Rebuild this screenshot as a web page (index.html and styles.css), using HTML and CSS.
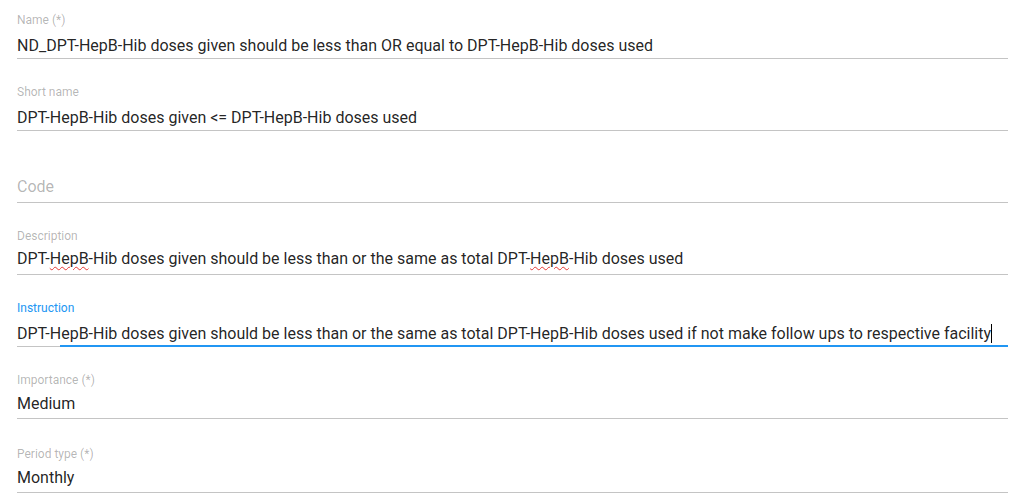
FILE: index.html
```html
<!DOCTYPE html>
<html>
<head>
<meta charset="utf-8">
<link rel="stylesheet" href="styles.css">
</head>
<body>
<form class="form">
  <div class="field">
    <label class="label">Name (*)</label>
    <div class="value">ND_DPT-HepB-Hib doses given should be less than OR equal to DPT-HepB-Hib doses used</div>
    <div class="line"></div>
  </div>
  <div class="field">
    <label class="label">Short name</label>
    <div class="value">DPT-HepB-Hib doses given &lt;= DPT-HepB-Hib doses used</div>
    <div class="line"></div>
  </div>
  <div class="field field-empty">
    <div class="value placeholder">Code</div>
    <div class="line"></div>
  </div>
  <div class="field field-multi">
    <label class="label">Description</label>
    <div class="value">DPT-<span class="spell">HepB</span>-Hib doses given should be less than or the same as total DPT-<span class="spell">HepB</span>-Hib doses used</div>
    <div class="line"></div>
  </div>
  <div class="field focused">
    <label class="label">Instruction</label>
    <div class="value">DPT-HepB-Hib doses given should be less than or the same as total DPT-HepB-Hib doses used if not make follow ups to respective facility<span class="caret"></span></div>
    <div class="line"><div class="focus-line"></div></div>
  </div>
  <div class="field field-select">
    <label class="label">Importance (*)</label>
    <div class="value">Medium</div>
    <div class="line"></div>
  </div>
  <div class="field field-select field-last">
    <label class="label">Period type (*)</label>
    <div class="value">Monthly</div>
    <div class="line"></div>
  </div>
</form>
</body>
</html>
```

FILE: styles.css
```css
html, body {
  margin: 0;
  padding: 0;
  background: #ffffff;
}
body {
  font-family: Roboto, "Liberation Sans", Arial, sans-serif;
  overflow: hidden;
}
.form {
  display: flex;
  flex-direction: column;
  padding: 0 1px 0 17px;
}
.field {
  height: 72px;
  display: flex;
  flex-direction: column;
  padding-top: 13px;
  box-sizing: border-box;
}
.field-last {
  margin-top: 2px;
}
.field-empty {
  padding-top: 33px;
}
.label {
  font-size: 12px;
  line-height: 14px;
  height: 14px;
  color: rgba(0, 0, 0, 0.3);
}
.focused .label {
  color: #2196f3;
}
.value {
  margin-top: 9px;
  font-size: 16px;
  line-height: 20px;
  height: 20px;
  color: rgba(0, 0, 0, 0.87);
  white-space: nowrap;
}
.field-empty .value {
  margin-top: 0;
}
.field-multi .value {
  margin-top: 6px;
}
.field-select .value {
  margin-top: 7px;
}
.placeholder {
  color: rgba(0, 0, 0, 0.3);
}
.spell {
  text-decoration: underline wavy #e53935;
  text-decoration-thickness: 1px;
  text-underline-offset: 2px;
}
.caret {
  display: inline-block;
  width: 1px;
  height: 19px;
  background: #000;
  vertical-align: -4px;
}
.line {
  margin-top: 2px;
  height: 1px;
  background: #c4c4c4;
  position: relative;
}
.field-empty .line {
  margin-top: 5px;
}
.field-multi .line {
  margin-top: 5px;
}
.field-select .line {
  margin-top: 4px;
}
.field-last .line {
  margin-top: 4px;
}
.focus-line {
  position: absolute;
  left: 43px;
  right: 0;
  top: -1px;
  height: 2px;
  background: #2196f3;
}
```
